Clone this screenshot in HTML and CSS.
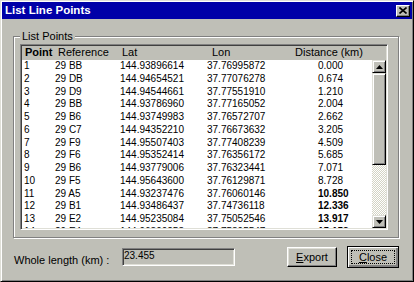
FILE: index.html
```html
<!DOCTYPE html>
<html lang="en">
<head>
<meta charset="UTF-8">
<title>List Line Points</title>
<link rel="stylesheet" href="styles.css">
</head>
<body>

<div class="window">
  <div class="titlebar">
    <span class="title">List Line Points</span>
    <span class="title-close">
      <svg width="8" height="7" viewBox="0 0 8 7"><path d="M0.5 0.5 L7.5 6.5 M7.5 0.5 L0.5 6.5" stroke="#000" stroke-width="1.6" fill="none"/></svg>
    </span>
  </div>

  <div class="content">
    <fieldset class="group">
      <legend>List Points</legend>
      <div class="listview">
        <div class="lv-header">
          <span class="bold">Point</span>
          <span>Reference</span>
          <span>Lat</span>
          <span>Lon</span>
          <span>Distance (km)</span>
        </div>
        <div class="lv-body">
          <div class="lv-rows">
            <div class="row"><span>1</span><span>29 BB</span><span>144.93896614</span><span>37.76995872</span><span>0.000</span></div>
            <div class="row"><span>2</span><span>29 DB</span><span>144.94654521</span><span>37.77076278</span><span>0.674</span></div>
            <div class="row"><span>3</span><span>29 D9</span><span>144.94544661</span><span>37.77551910</span><span>1.210</span></div>
            <div class="row"><span>4</span><span>29 BB</span><span>144.93786960</span><span>37.77165052</span><span>2.004</span></div>
            <div class="row"><span>5</span><span>29 B6</span><span>144.93749983</span><span>37.76572707</span><span>2.662</span></div>
            <div class="row"><span>6</span><span>29 C7</span><span>144.94352210</span><span>37.76673632</span><span>3.205</span></div>
            <div class="row"><span>7</span><span>29 F9</span><span>144.95507403</span><span>37.77408239</span><span>4.509</span></div>
            <div class="row"><span>8</span><span>29 F6</span><span>144.95352414</span><span>37.76356172</span><span>5.685</span></div>
            <div class="row"><span>9</span><span>29 B6</span><span>144.93779006</span><span>37.76323441</span><span>7.071</span></div>
            <div class="row"><span>10</span><span>29 F5</span><span>144.95643600</span><span>37.76129871</span><span>8.728</span></div>
            <div class="row"><span>11</span><span>29 A5</span><span>144.93237476</span><span>37.76060146</span><span class="bold">10.850</span></div>
            <div class="row"><span>12</span><span>29 B1</span><span>144.93486437</span><span>37.74736118</span><span class="bold">12.336</span></div>
            <div class="row"><span>13</span><span>29 E2</span><span>144.95235084</span><span>37.75052546</span><span class="bold">13.917</span></div>
            <div class="row"><span>14</span><span>29 E4</span><span>144.96390258</span><span>37.75395547</span><span class="bold">15.153</span></div>
          </div>
          <div class="scrollbar">
            <div class="sb-btn">
              <svg width="7" height="4" viewBox="0 0 7 4"><path d="M3.5 0 L7 4 L0 4 Z" fill="#000"/></svg>
            </div>
            <div class="sb-thumb"></div>
            <div class="sb-track"></div>
            <div class="sb-btn">
              <svg width="7" height="4" viewBox="0 0 7 4"><path d="M0 0 L7 0 L3.5 4 Z" fill="#000"/></svg>
            </div>
          </div>
        </div>
      </div>
    </fieldset>

    <div class="footer">
      <span class="total-label">Whole length (km) :</span>
      <div class="total-box">23.455</div>
      <div class="buttons">
        <button class="btn"><u>E</u>xport</button>
        <button class="btn btn-default"><span class="focus"><u>C</u>lose</span></button>
      </div>
    </div>
  </div>
</div>

</body>
</html>
```

FILE: styles.css
```css
body {
  margin: 0;
  background: #bfbfb7;
  font-family: "Liberation Sans", Arial, sans-serif;
  color: #000;
}

.window {
  width: 414px;
  height: 282px;
  box-sizing: border-box;
  padding: 1px;
  background: #bfbfb7;
  border: 1px solid;
  border-color: #dfdfd7 #000 #000 #dfdfd7;
  box-shadow: inset 1px 1px #fff, inset -1px -1px #808080;
}

/* barra de titulo */
.titlebar {
  height: 17px;
  display: flex;
  align-items: center;
  justify-content: space-between;
  padding: 0 2px 0 3px;
  background: #0000a8;
  color: #fff;
  font-size: 11.5px;
  font-weight: bold;
}

.title {
  line-height: 13px;
  padding-bottom: 1px;
}

.title-close {
  width: 14px;
  height: 12px;
  box-sizing: border-box;
  display: flex;
  align-items: center;
  justify-content: center;
  background: #bfbfb7;
  border: 1px solid;
  border-color: #fff #000 #000 #fff;
  box-shadow: inset -1px -1px #808080;
}

.content {
  padding: 11px 11px 0;
}

/* grupo "List Points" */
.group {
  width: 386px;
  box-sizing: border-box;
  margin: 0;
  padding: 1px 10px 7px 6px;
  border: 1px solid #808080;
  box-shadow: 1px 1px 0 #fff, inset 1px 1px 0 #fff;
}

.group legend {
  padding: 0 2px;
  font-size: 11px;
  line-height: 13px;
  background: #bfbfb7;
}

.listview {
  width: 368px;
  height: 186px;
  box-sizing: border-box;
  padding: 1px;
  display: flex;
  flex-direction: column;
  border: 1px solid;
  border-color: #808080 #fff #fff #808080;
  box-shadow: inset 1px 1px #404040, inset -1px -1px #dfdfd7;
}

.lv-header {
  height: 14px;
  flex: none;
  display: grid;
  grid-template-columns: 33px 64px 90px 83px auto;
  padding-left: 3px;
  font-size: 11px;
  line-height: 13px;
  white-space: nowrap;
}

.bold {
  font-weight: bold;
}

.lv-body {
  flex: 1;
  display: flex;
  min-height: 0;
}

.lv-rows {
  flex: 1;
  background: #fff;
  overflow: hidden;
}

.row {
  display: grid;
  grid-template-columns: 31px 65px 87px 111px auto;
  padding-left: 2px;
  height: 12.75px;
  line-height: 12.75px;
  font-size: 10px;
  white-space: nowrap;
}

/* barra de desplazamiento */
.scrollbar {
  width: 14px;
  display: flex;
  flex-direction: column;
}

.sb-btn,
.sb-thumb {
  box-sizing: border-box;
  background: #bfbfb7;
  border: 1px solid;
  border-color: #dfdfd7 #000 #000 #dfdfd7;
  box-shadow: inset 1px 1px #fff, inset -1px -1px #808080;
}

.sb-btn {
  height: 13px;
  display: flex;
  align-items: center;
  justify-content: center;
}

.sb-thumb {
  height: 92px;
}

.sb-track {
  flex: 1;
  background-image: repeating-conic-gradient(#fff 0 25%, #d4d4c4 0 50%);
  background-size: 2px 2px;
}

/* pie */
.footer {
  margin-top: 8px;
  height: 22px;
  display: flex;
  align-items: center;
  font-size: 11px;
}

.total-label {
  width: 108px;
  margin-left: 1px;
  margin-top: 7px;
  line-height: 13px;
  white-space: nowrap;
}

.total-box {
  width: 113px;
  height: 18px;
  box-sizing: border-box;
  padding: 1px 1px;
  font-size: 10px;
  line-height: 12px;
  border: 1px solid;
  border-color: #808080 #fff #fff #808080;
  box-shadow: inset 1px 1px #404040, inset -1px -1px #dfdfd7;
}

.buttons {
  margin-left: auto;
  margin-right: 2px;
  display: flex;
  align-items: center;
  gap: 10px;
}

.btn {
  width: 50px;
  height: 20px;
  box-sizing: border-box;
  padding: 0;
  font-family: inherit;
  font-size: 11px;
  color: #000;
  background: #bfbfb7;
  border: 1px solid;
  border-color: #fff #000 #000 #fff;
  box-shadow: inset -1px -1px #808080, inset 1px 1px #dfdfd7;
}

.btn-default {
  width: 52px;
  height: 22px;
  padding: 3px;
  outline: 1px solid #000;
  outline-offset: -1px;
  border-color: #000;
  box-shadow: inset 1px 1px #fff, inset -1px -1px #808080, inset -2px -2px #808080;
}

.focus {
  display: block;
  height: 100%;
  box-sizing: border-box;
  line-height: 12px;
  border: 1px dotted #000;
}
```
